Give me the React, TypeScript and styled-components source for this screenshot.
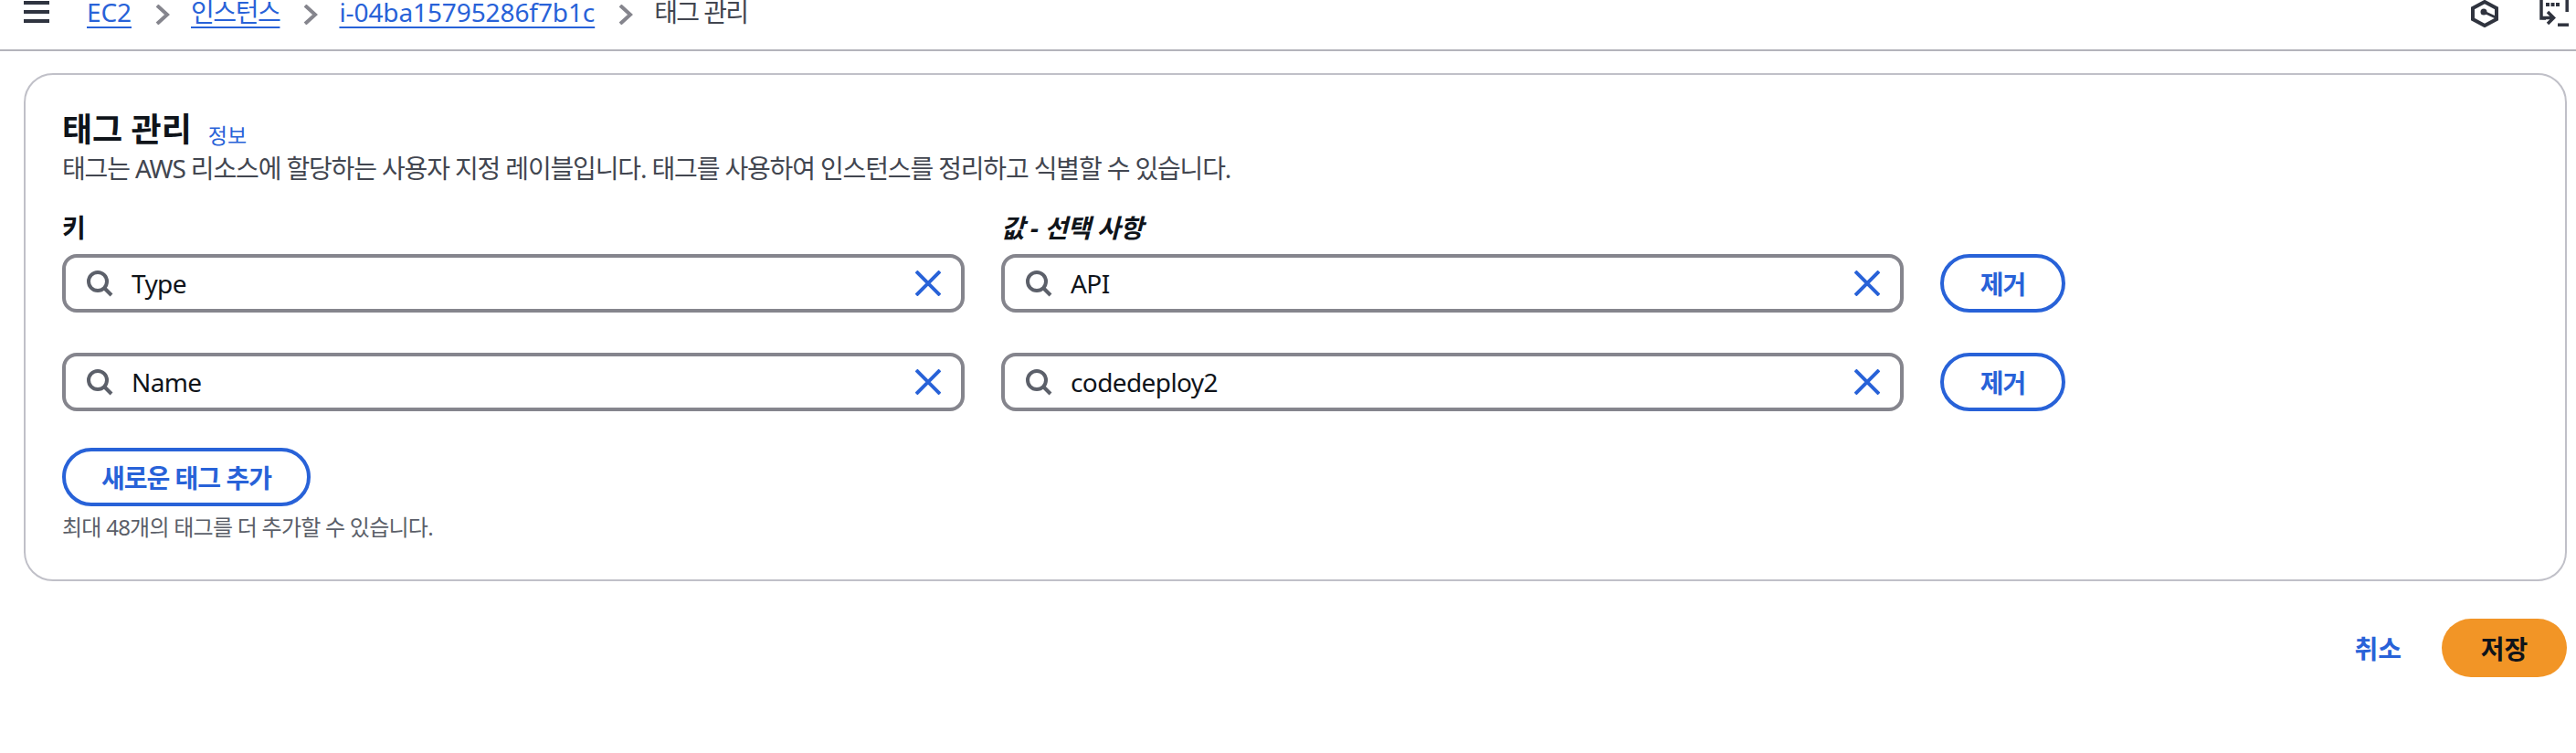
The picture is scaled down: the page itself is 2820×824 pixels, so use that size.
import React from "react";
import styled, { createGlobalStyle } from "styled-components";

const Global = createGlobalStyle`
  html, body { margin: 0; padding: 0; background: #fff; }
  body { font-family: "Noto Sans", "Noto Sans CJK KR", sans-serif; color: #0f141a; overflow: hidden; }
`;
const Page = styled.div`width: 2820px; height: 824px; display: flex; flex-direction: column; overflow: hidden;`;
const TopBar = styled.header`
  height: 56px; box-sizing: border-box; border-bottom: 2px solid #b4b4bb;
  padding: 0 8px 0 26px; display: flex; align-items: flex-start;
`;
const Burger = styled.svg`width: 28px; height: 26px; margin-right: 41px; flex: none;`;
const Crumbs = styled.nav`display: flex; align-items: center; height: 26px; font-size: 28px; line-height: 26px;`;
const CrumbLink = styled.a<{ $tight?: boolean }>`
  color: #2862d8; text-decoration: underline; text-decoration-thickness: 2px; text-underline-offset: 5px;
  letter-spacing: ${(p) => (p.$tight ? "-1.4px" : "-0.1px")};
`;
const CrumbText = styled.span`color: #424650; letter-spacing: -1.6px;`;
const Chevron = styled.svg`width: 16px; height: 22px; margin: 5px 23px 0 26px; flex: none;`;
const TopIcons = styled.div`margin-left: auto; display: flex; gap: 45px; align-items: flex-start;`;
const TopIcon = styled.svg`width: 32px; height: 30px; display: block;`;
const Main = styled.main`padding: 24px 10px 0 26px; display: flex; flex-direction: column;`;
const Card = styled.section`
  box-sizing: border-box; height: 556px; border: 2px solid #c0c0c8; border-radius: 32px;
  padding: 36px 40px 0;
`;
const TitleRow = styled.div`display: flex; align-items: center; gap: 18px; height: 48px;`;
const Title = styled.h1`margin: 0; font-size: 36px; line-height: 48px; font-weight: 700; color: #0f141a;`;
const Info = styled.a`color: #2862d8; font-size: 23px; line-height: 28px; margin-top: 11px;`;
const Desc = styled.p`margin: 0; font-size: 28px; line-height: 36px; color: #424650; letter-spacing: -1.15px;`;
const Grid = styled.div`
  display: grid; grid-template-columns: 988px 988px auto; column-gap: 40px; justify-content: start;
  margin-top: 31px;
`;
const Label = styled.div<{ $italic?: boolean }>`
  font-size: 28px; line-height: 32px; font-weight: 700; height: 45px; color: #0f141a;
  font-style: ${(p) => (p.$italic ? "italic" : "normal")};
  letter-spacing: -0.5px;
`;
const Field = styled.div`
  box-sizing: border-box; height: 64px; border: 4px solid #85858d; border-radius: 16px;
  padding: 0 22px 0 22px; display: flex; align-items: center; margin-bottom: 44px; gap: 20px;
`;
const FieldText = styled.span`flex: 1; font-size: 28px; color: #0f141a; line-height: 36px; letter-spacing: -0.6px; margin-top: -1px;`;
const PillButton = styled.button`
  height: 64px; box-sizing: border-box; border: 4px solid #2862d8; border-radius: 32px; background: #fff;
  color: #2862d8; font-family: inherit; font-size: 28px; font-weight: 700; padding: 0; cursor: pointer;
  white-space: nowrap; letter-spacing: -1px;
`;
const RemoveButton = styled(PillButton)`width: 137px;`;
const AddRow = styled.div`margin-top: -4px;`;
const AddButton = styled(PillButton)`width: 272px; display: block;`;
const Hint = styled.p`margin: 8px 0 0; font-size: 24px; line-height: 30px; color: #5b5f69; letter-spacing: -0.75px;`;
const Footer = styled.footer`display: flex; justify-content: flex-end; align-items: center; gap: 44px; margin-top: 41px;`;
const Cancel = styled.a`color: #2862d8; font-size: 28px; font-weight: 700;`;
const Save = styled.button`
  width: 137px; height: 64px; border: 0; border-radius: 32px; background: #f29526; color: #0f141a;
  font-family: inherit; font-size: 28px; font-weight: 700; cursor: pointer;
`;
const SearchSvg = styled.svg`width: 30px; height: 30px; flex: none;`;
const ClearSvg = styled.svg`width: 28px; height: 28px; flex: none;`;

const Search = () => (
  <SearchSvg viewBox="0 0 30 30" fill="none" stroke="#5c606a" strokeWidth="4">
    <circle cx="13" cy="13" r="10" />
    <path d="M20 20l8 8" />
  </SearchSvg>
);
const Clear = () => (
  <ClearSvg viewBox="0 0 28 28" fill="none" stroke="#2862d8" strokeWidth="4">
    <path d="M1 1l26 26M27 1L1 27" />
  </ClearSvg>
);
const Crumb = () => (
  <Chevron viewBox="0 0 16 22" fill="none" stroke="#85858d" strokeWidth="4">
    <path d="M2 1l11 10L2 21" />
  </Chevron>
);
const TagField = ({ value }: { value: string }) => (
  <Field>
    <Search />
    <FieldText>{value}</FieldText>
    <Clear />
  </Field>
);

export default function App() {
  return (
    <Page>
      <Global />
      <TopBar>
        <Burger viewBox="0 0 28 26" fill="#2f3440">
          <rect x="0" y="1" width="28" height="4" />
          <rect x="0" y="11" width="28" height="4" />
          <rect x="0" y="21" width="28" height="4" />
        </Burger>
        <Crumbs>
          <CrumbLink>EC2</CrumbLink>
          <Crumb />
          <CrumbLink $tight>인스턴스</CrumbLink>
          <Crumb />
          <CrumbLink>i-04ba15795286f7b1c</CrumbLink>
          <Crumb />
          <CrumbText>태그 관리</CrumbText>
        </Crumbs>
        <TopIcons>
          <TopIcon viewBox="0 0 32 30" fill="none" stroke="#30343f" strokeWidth="4">
            <path d="M17 2l13 7v12l-13 7-13-7V9z" />
            <circle cx="16" cy="13" r="3.500" fill="#30343f" stroke="none" />
            <path d="M16 13l14 6.500" strokeWidth="3" />
          </TopIcon>
          <TopIcon viewBox="0 0 32 30" fill="none" stroke="#30343f" strokeWidth="3.500">
            <path d="M2 0v20h5M30.200 0v13" />
            <path d="M7 5h15" strokeDasharray="4 1.500" strokeWidth="4" />
            <path d="M9 13l6.500 6.500L9 26M3 19.500h12" />
            <path d="M20 27.200h12" />
          </TopIcon>
        </TopIcons>
      </TopBar>
      <Main>
        <Card>
          <TitleRow>
            <Title>태그 관리</Title>
            <Info>정보</Info>
          </TitleRow>
          <Desc>태그는 AWS 리소스에 할당하는 사용자 지정 레이블입니다. 태그를 사용하여 인스턴스를 정리하고 식별할 수 있습니다.</Desc>
          <Grid>
            <Label>키</Label>
            <Label $italic>값 - 선택 사항</Label>
            <div />
            <TagField value="Type" />
            <TagField value="API" />
            <RemoveButton>제거</RemoveButton>
            <TagField value="Name" />
            <TagField value="codedeploy2" />
            <RemoveButton>제거</RemoveButton>
          </Grid>
          <AddRow>
            <AddButton>새로운 태그 추가</AddButton>
            <Hint>최대 48개의 태그를 더 추가할 수 있습니다.</Hint>
          </AddRow>
        </Card>
        <Footer>
          <Cancel>취소</Cancel>
          <Save>저장</Save>
        </Footer>
      </Main>
    </Page>
  );
}
